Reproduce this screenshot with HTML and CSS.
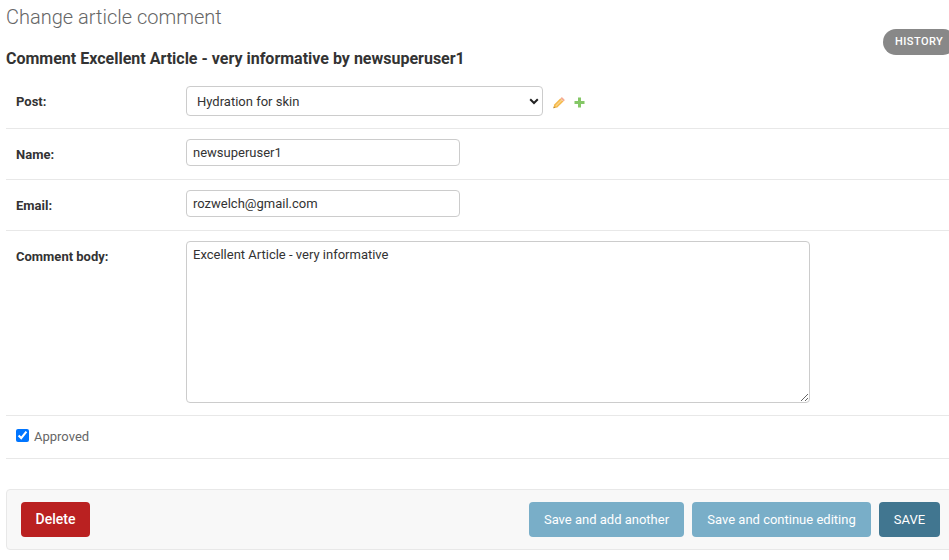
FILE: index.html
```html
<!DOCTYPE html>
<html lang="en">
<head>
<meta charset="utf-8">
<title>Change article comment</title>
<link rel="stylesheet" href="styles.css">
</head>
<body>
<main class="content">
  <header class="heading">
    <h1>Change article comment</h1>
    <a class="history">HISTORY</a>
    <h2>Comment Excellent Article - very informative by newsuperuser1</h2>
  </header>
  <form>
    <div class="form-row row-post">
      <label class="field-label" for="post">Post:</label>
      <div class="select-wrap">
        <select id="post"><option>Hydration for skin</option></select>
        <svg class="chevron" viewBox="0 0 10 7" width="10" height="7"><path d="M1.2 1.3 5 5l3.8-3.7" fill="none" stroke="#222" stroke-width="2"/></svg>
      </div>
      <svg class="icon-edit" viewBox="0 0 12 12" width="12" height="12"><path d="M.4 11.2 1.2 7.4 7.2 1.5 10.4 4.6 4.3 10.5z" fill="#f4b94c"/><path d="M2.8 9 8.8 3" stroke="#fad388" stroke-width="1.2"/><path d="M8.2.6q.6-.6 1.2 0l2 2q.6.6 0 1.2l-.8.7-3.2-3.1z" fill="#f5ad94"/><path d="m.4 11.2.4-1.8 1.5 1.3z" fill="#a78342"/></svg>
      <svg class="icon-add" viewBox="0 0 11 11" width="11" height="11"><path d="M4 .5h3V4h3.5v3H7v3.5H4V7H.5V4H4z" fill="#84c766"/></svg>
    </div>
    <div class="form-row">
      <label class="field-label" for="name">Name:</label>
      <input class="text-input" id="name" type="text" value="newsuperuser1">
    </div>
    <div class="form-row">
      <label class="field-label" for="email">Email:</label>
      <input class="text-input" id="email" type="text" value="rozwelch@gmail.com">
    </div>
    <div class="form-row row-body">
      <label class="field-label" for="body">Comment body:</label>
      <textarea id="body">Excellent Article - very informative</textarea>
    </div>
    <div class="form-row row-check">
      <input id="approved" type="checkbox" checked>
      <label class="check-label" for="approved">Approved</label>
    </div>
    <div class="submit-row">
      <a class="button delete">Delete</a>
      <button type="button" class="button another">Save and add another</button>
      <button type="button" class="button continue">Save and continue editing</button>
      <button type="button" class="button save">SAVE</button>
    </div>
  </form>
</main>
</body>
</html>
```
FILE: styles.css
```css
* { box-sizing: border-box; }

body {
  margin: 0;
  height: 560px;
  overflow: hidden;
  background: #fff;
  color: #333;
  font: 13px/18px Roboto, sans-serif;
}

.content { padding-left: 6px; }

.heading { position: relative; height: 76px; }

h1 {
  margin: 0;
  padding-top: 5px;
  font-size: 20px;
  line-height: 24px;
  font-weight: 300;
  color: #666;
}

h2 {
  margin: 20px 0 0;
  font-size: 16px;
  line-height: 20px;
  font-weight: 700;
}

.history {
  position: absolute;
  top: 29px;
  right: -7px;
  width: 73px;
  height: 26px;
  padding-left: 12px;
  border-radius: 13px;
  background: #888;
  color: #fff;
  font-size: 11px;
  line-height: 25px;
  letter-spacing: 0.45px;
  font-weight: 500;
}

.form-row {
  display: flex;
  align-items: flex-start;
  height: 51px;
  padding: 10px 0 0 10px;
  border-bottom: 1px solid #e8e8e8;
}

.field-label {
  width: 170px;
  padding-top: 7px;
  font-weight: 700;
}

.row-post { height: 53px; }

.select-wrap { position: relative; width: 357px; height: 30px; }

select, .text-input, textarea {
  margin: 0;
  border: 1px solid #ccc;
  border-radius: 4px;
  background: #fff;
  color: #333;
  font: 13px/16px Roboto, sans-serif;
  outline: none;
}

select {
  width: 357px;
  height: 30px;
  padding: 2px 10px 0;
  appearance: none;
}

.chevron { position: absolute; right: 4px; top: 12px; }

.icon-edit { margin: 11px 0 0 10px; }
.icon-add { margin: 11px 0 0 9px; }

.text-input { width: 274px; height: 27px; padding: 5px 6px; }

.row-body { height: 185px; }

textarea { width: 624px; height: 162px; padding: 5px 6px; resize: both; }

.row-check { height: 43px; }

.row-check input { width: 13px; height: 13px; margin: 3px 5px 0 0; accent-color: #0075ff; }

.check-label { padding-top: 2px; color: #666; }

.submit-row {
  display: flex;
  height: 61px;
  margin: 30px -10px 0 0;
  padding: 12px 18px 0 14px;
  border: 1px solid #e8e8e8;
  border-radius: 4px;
  background: #f8f8f8;
}

.button {
  height: 35px;
  margin: 0 0 0 8px;
  padding: 0;
  border: 0;
  border-radius: 4px;
  background: #79aec8;
  color: #fff;
  font: 400 13px/35px Roboto, sans-serif;
  text-align: center;
}

.delete { width: 69px; margin: 0 auto 0 0; background: #ba2121; font-size: 14px; font-weight: 500; }
.another { width: 155px; }
.continue { width: 179px; }
.save { width: 61px; background: #417690; }
```
